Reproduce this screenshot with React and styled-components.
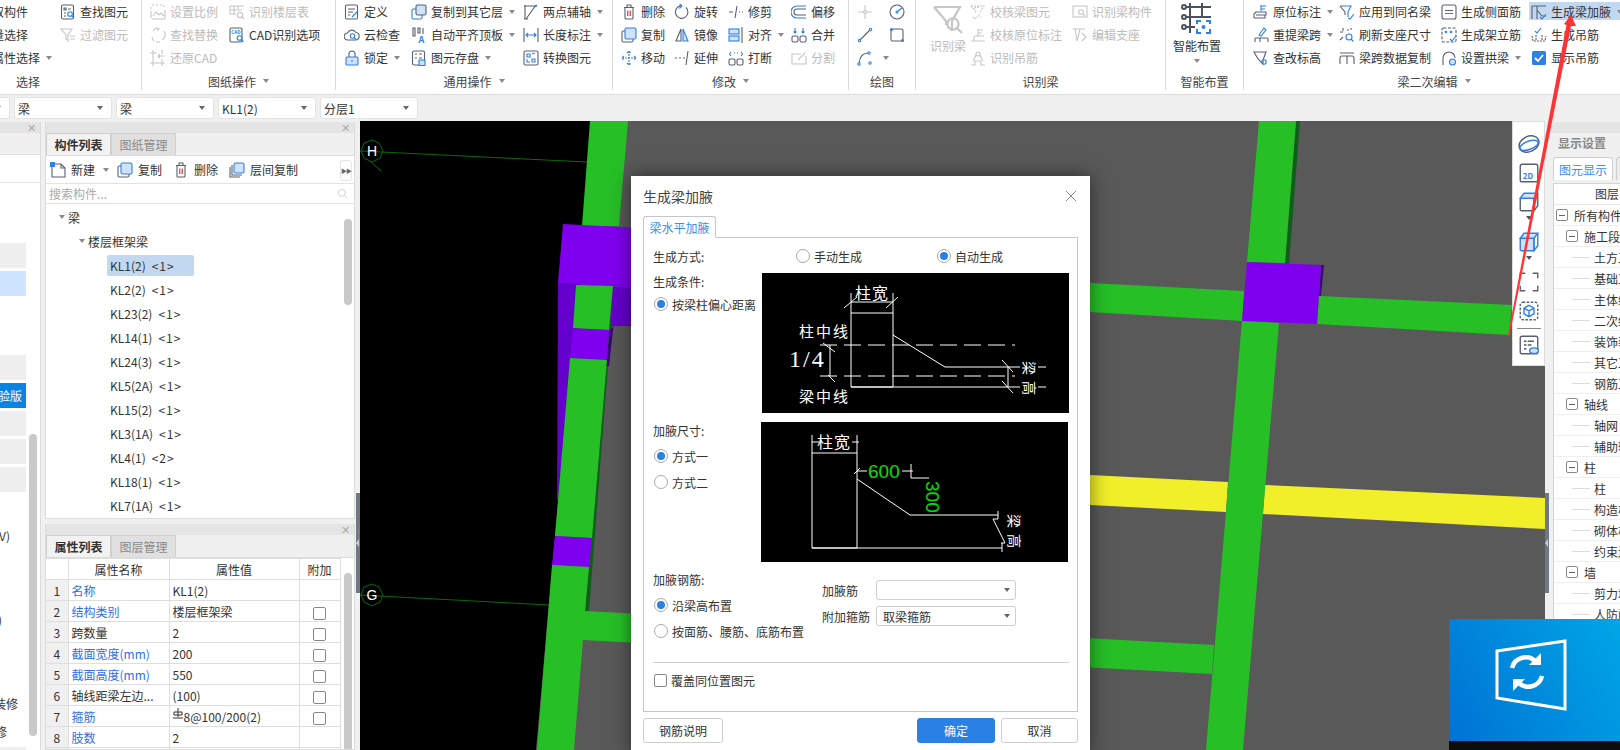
import React from 'react';
import styled, { createGlobalStyle } from 'styled-components';

const GlobalStyle = createGlobalStyle`
  html, body { margin: 0; padding: 0; background: #f0f0f0; }
  body { font-family: "Noto Sans CJK SC", "Noto Sans", sans-serif; font-size: 12px; color: #333; }
`;

const Root = styled.div`
  position: relative;
  width: 1620px;
  height: 750px;
  overflow: hidden;
  display: flex;
  flex-direction: column;
  background: #f0f0f0;
`;

/* ---------- icons ---------- */

const IconSvg = styled.svg`
  flex: none;
  width: ${({ $s }) => $s || 16}px;
  height: ${({ $s }) => $s || 16}px;
  fill: none;
  stroke: currentColor;
  stroke-width: 1.1;
  color: ${({ $off }) => ($off ? '#c6c6c6' : '#566071')};
  --a: ${({ $off }) => ($off ? '#c6c6c6' : '#2f80e4')};
  --f: ${({ $off }) => ($off ? '#eeeeee' : '#cfe2fa')};
  .a { stroke: var(--a); }
  .f { fill: var(--f); }
  .r { stroke: #d22; }
`;

const icons = {
  find: <><rect x="1.5" y="1" width="12" height="14" rx="1.5" /><path d="M4 4h2v2H4zM8 5h3M4 9h2M4 12h2" /><circle className="a" cx="10" cy="10" r="2.3" /><path className="a" d="M11.7 11.7l2.3 2.3" /></>,
  filter: <><path d="M1 2h11L8 8v6l-2-2V8z" /><path d="M10 9h5M10 12h5" /></>,
  scale: <><path d="M2 1h2M6 1h2M10 1h2M14 1v2M1 3v2M2 15h12a1 1 0 0 0 1-1V6M1 7v7" /><path d="M3 12l3-4 3 3 2-2 3 3" /></>,
  replace: <path d="M3 4a6 6 0 0 1 5-3M2 10a6 6 0 0 0 2 4M12 13a6 6 0 0 0 2-9M6 15h4M7 1l2 1-2 2" />,
  restore: <path d="M3 0v16M12 0v4M12 9v7M0 3h7M0 13h15M14 6H8l2-2M8 6l2 2" />,
  floors: <><path d="M1 2h14M1 2v8M5 2v8M1 6h12M1 10h6M9 2v3" /><circle cx="11" cy="11" r="2.6" /><path d="M13 13l2 2" /></>,
  cadopt: <><rect x="1" y="1" width="12" height="14" rx="1.5" /><text x="2.2" y="7" fontSize="4.6" stroke="none" fill="#2f80e4" fontWeight="700">CAD</text><circle className="a" cx="10.5" cy="11" r="2.3" /><path className="a" d="M12 12.6l2.4 2.4" /></>,
  define: <><rect x="1.5" y="1" width="12" height="14" rx="1.5" /><path d="M4 5h7M4 8h5M4 11h2" /><path className="a" d="M8 13l6-6" /></>,
  cloud: <><path d="M4 13a3.5 3.5 0 0 1-.5-7A4.8 4.8 0 0 1 12 5.5 3.8 3.8 0 0 1 12 13z" /><circle className="a" cx="8.5" cy="9" r="2.2" /><path className="a" d="M10 10.5l2 2" /></>,
  lock: <><path d="M5 7V4a3 3 0 0 1 6 0v3" /><rect className="a f" x="2" y="7" width="12" height="8" rx="1" /><path className="a" d="M8 10v2" /></>,
  copyto: <><rect className="a" x="1" y="5" width="10" height="10" rx="1.5" /><rect className="f" x="5" y="1" width="10" height="10" rx="1.5" /></>,
  top: <><path d="M2 1h2v8H2zM7 1h2v5H7zM12 1v6" /><text x="7.5" y="15.5" fontSize="9" fontWeight="700" stroke="none" fill="#2f80e4">A</text></>,
  save: <><rect x="1.5" y="1" width="12" height="14" rx="1.5" /><path d="M4 4h2M8 4h3M4 8h2M8 8h3" /><rect className="a f" x="8" y="10" width="6" height="5.5" /></>,
  twopoint: <><path d="M1 2h13M3 15L13 1M2 1v14M1 15h4" /><path className="a" d="M11 3l3-2" /></>,
  dim: <><path d="M1 1v14M15 1v14" /><path className="a" d="M3 8h10M5 6L3 8l2 2M11 6l2 2-2 2" /></>,
  convert: <><rect x="1" y="1" width="14" height="14" rx="1.5" /><path className="a" d="M4 4h3v3H4zM9 4a2 2 0 0 1 3 0M9 9h3v3H9zM7 12H4V9" /></>,
  trash: <><path d="M3 3.5h10M6 3V1h4v2M4 4v10a1 1 0 0 0 1 1h6a1 1 0 0 0 1-1V4" /><path className="r" d="M6.8 6.5v5.5M9.2 6.5v5.5" /></>,
  rotate: <><path d="M12 3.5A6.3 6.3 0 1 1 6 2" /><path className="a" d="M6 0v4l2-2z" /></>,
  trim: <path d="M1 8h4M11 8h1M14 8h1M9 2L7 14" />,
  mirror: <><path d="M7 2L2 14h5z" /><path className="a f" d="M9 2l5 12H9z" /></>,
  extend: <path d="M1 8h2M5 8h2M9 8h2M14 1l-2 14" />,
  align: <><rect className="a f" x="1" y="2" width="10" height="5" /><rect className="a f" x="1" y="9" width="10" height="5" /><path d="M14 0v16" /></>,
  merge: <><rect x="1" y="9" width="6" height="6" rx="1.5" /><rect x="9" y="9" width="6" height="6" rx="1.5" /><path className="a" d="M4 1v5M12 1v5M2.5 4.5L4 6l1.5-1.5M10.5 4.5L12 6l1.5-1.5" /></>,
  breakit: <><rect x="1" y="9" width="6" height="6" rx="1.5" /><rect x="9" y="9" width="6" height="6" rx="1.5" /><path className="a" d="M3 2l-1.5 2L3 6M13 2l1.5 2L13 6" /><path d="M6 3h1M9 3h1" /></>,
  offset: <><path className="a" d="M15 2H6a6 6 0 0 0 0 12h9" /><path d="M15 5H6a3 3 0 0 0 0 6h9" /></>,
  split: <><path d="M15 6v8H1V4h9" /><path d="M7 10l7-7" /></>,
  copy: <><rect x="1" y="4" width="11" height="11" rx="1.5" /><rect className="a f" x="4" y="1" width="11" height="11" rx="1.5" /></>,
  move: <path className="a" d="M8 1v14M1 8h14M6 3l2-2 2 2M6 13l2 2 2-2M3 6L1 8l2 2M13 6l2 2-2 2" strokeDasharray="2 1" />,
  point: <><path d="M8 1v5M8 10v5M1 8h5M10 8h5" /><circle className="f" cx="8" cy="8" r="1.5" /></>,
  circle: <><circle cx="8" cy="8" r="7" /><circle className="a" cx="8" cy="8" r="1" /><path className="a" d="M9 7l4-3" /></>,
  line: <><path d="M3 13L13 3" /><circle className="a" cx="2.5" cy="13.5" r="1.2" /><circle className="a" cx="13.5" cy="2.5" r="1.2" /></>,
  rect: <><rect x="2" y="2" width="12" height="12" rx="1.5" /><circle className="a" cx="2.5" cy="2.5" r="1" /><circle className="a" cx="13.5" cy="13.5" r="1" /></>,
  arc: <><path d="M2 13C3 6 7 3 11 3" /><circle className="a" cx="2" cy="14" r="1.2" /><circle className="a" cx="12" cy="3" r="1.2" /><circle className="a" cx="13" cy="13" r="1.2" /></>,
  beam: <><path d="M1 2h13L10 9v5M1 2l6 7v2" /><circle cx="10.5" cy="10.5" r="2.8" /><path d="M12.5 12.5l2.5 2.5" /></>,
  checkbeam: <path d="M1 2h13l-4 6M1 2l6 7M9 3l-5 1M3 13l2 2 5-5M10 13h1" strokeDasharray="2 1" />,
  origin: <path d="M1 14h14M4 14v-3a2 2 0 0 1 2-2h8M8 2v7M8 3h5M8 6h4" />,
  hanger: <><circle cx="8" cy="4" r="2" /><path d="M1 15h4v-4h6v4h4M6 5L3 11M10 5l3 6" /></>,
  member: <><rect x="1" y="2" width="14" height="11" /><circle cx="9" cy="8" r="2.3" /><path d="M11 10l2 2" /></>,
  support: <path d="M1 2h12M3 2l2 12 3-12M10 6l4 4-4 4" />,
  tag: <><path d="M8 1v6M8 2h5M8 5h4" className="a" /><path d="M1 14v-4l2-2h10v3H3" /><path d="M1 14h11v-3" /></>,
  refetch: <><path d="M2 15v-3a1 1 0 0 1 1-1h11a1 1 0 0 1 1 1v3M7 11v4" /><path className="a" d="M6 8l5-7 2 2-5 6z" /></>,
  height: <><path d="M1 2h12l-3 8v4L5 9z" /><circle className="a" cx="11" cy="12" r="2.2" /></>,
  same: <><path className="a" d="M1 2h11l-3 6v5" /><path d="M1 2l5 6v3" /><path className="a" d="M9 14l2 1 4-5" /></>,
  refresh: <><path d="M4 1v3M1 5h3M10 3h-2M12 1v2" /><circle className="a" cx="10" cy="10" r="3" /><path className="a" d="M12 12l2.5 2.5" /><path d="M1 13l3-3" /></>,
  copyspan: <path d="M1 14V8a2 2 0 0 1 2-2h10a2 2 0 0 1 2 2v6M8 6v8M1 3h14" />,
  side: <><rect x="1" y="1" width="14" height="14" rx="2" /><path d="M4 6.5h8" /><path className="a" d="M4 9.5h8" /></>,
  erect: <><rect x="1" y="1" width="14" height="14" rx="1.5" strokeDasharray="3 1.5" /><circle className="a" cx="5" cy="5" r=".8" /><circle className="a" cx="10" cy="5" r=".8" /><path className="a" d="M9 12l2 2 4-5" /></>,
  arch: <><path d="M2 15V8a6 6 0 0 1 12 0" /><circle className="a f" cx="11.5" cy="12" r="3" /></>,
  haunch: <><path d="M1 2h14M1 2v13M6 2v13M6 6l5 6h4" /><path className="a" d="M9 13l2 2 4-5" /></>,
  hang: <><path className="a" d="M4 4l2 2 4-5" /><path d="M1 9l1 5h12l1-5M5 8v6M11 8v6" strokeDasharray="2 1" /></>,
  chk: <><rect x="1" y="1" width="14" height="14" rx="1.5" fill="#2f80e4" stroke="none" /><path d="M4 8l3 3 5-6" stroke="#fff" strokeWidth="1.8" /></>,
  newdoc: <><path d="M4 2h7l4 4v9H2V5" /><path d="M11 2v4h4" /><rect x="0" y="0" width="5" height="5" fill="#2f80e4" stroke="none" /></>,
  floorcopy: <><path d="M1 5v10h10M3 3v10h10" /><rect className="a f" x="5" y="1" width="10" height="10" rx="1.5" /></>,
  orbit: <><ellipse cx="8" cy="8" rx="7.5" ry="5.5" transform="rotate(-25 8 8)" /><ellipse className="a" cx="8" cy="9" rx="7" ry="3" transform="rotate(-20 8 9)" /></>,
  twod: <><rect x="1" y="1" width="14" height="14" rx="1.5" /><text x="3" y="12.5" fontSize="6.4" fontWeight="700" stroke="none" fill="#2f80e4">2D</text></>,
  cube: <><rect x="1" y="5" width="11" height="10" rx="1" /><path className="a f" d="M1 5l3-4h11l-3 4z" /><path d="M12 5v10l3-4V1" /></>,
  cubeb: <><rect className="a f" x="1" y="5" width="11" height="10" rx="1" /><path className="a f" d="M1 5l3-4h11l-3 4z" /><path className="a" d="M12 5v10l3-4V1" /></>,
  corners: <path d="M1 5V1h4M11 1h4v4M15 11v4h-4M5 15H1v-4" />,
  dcube: <><rect x="1" y="1" width="14" height="14" rx="2" strokeDasharray="2 1.2" /><path className="a" d="M8 3.5l4 2.2v4.6L8 12.5l-4-2.2V5.7zM4 5.7l4 2.2 4-2.2M8 8v4.5" /></>,
  listeye: <><rect x="1" y="1" width="14" height="14" rx="1.5" /><path d="M4 5h2M7 5h5M4 8h2M7 8h3M4 11h2" /><ellipse className="a f" cx="12" cy="12.5" rx="3.5" ry="2.2" /></>,
  search: <><circle cx="7" cy="7" r="5" /><path d="M11 11l3.5 3.5" /></>,
};

const Ico = ({ name, off, size, className }) => (
  <IconSvg viewBox="0 0 16 16" $off={off} $s={size} className={className}>{icons[name]}</IconSvg>
);

const Caret = styled.i`
  flex: none;
  width: 0;
  height: 0;
  margin-left: ${({ $ml }) => $ml ?? 6}px;
  border: 3.5px solid transparent;
  border-top: 4px solid ${({ $c }) => $c || '#8a8a8a'};
  border-bottom: 0;
`;

/* ---------- ribbon ---------- */

const Ribbon = styled.header`
  flex: 0 0 95px;
  display: flex;
  background: #fff;
  border-bottom: 1px solid #dcdcdc;
  box-sizing: border-box;
`;

const Group = styled.section`
  flex: 0 0 ${({ $w }) => $w}px;
  box-sizing: border-box;
  margin-left: ${({ $ml }) => $ml || 0}px;
  height: 90px;
  display: flex;
  flex-direction: column;
  border-right: 1px solid #dcdcdc;
  &:last-child { border-right: 0; }
`;

const GroupBody = styled.div`
  flex: 0 0 72px;
  display: flex;
  padding-left: ${({ $pad }) => $pad}px;
`;

const GroupLabel = styled.div`
  display: flex;
  justify-content: center;
  align-items: center;
  height: 18px;
  color: #444;
`;

const Col = styled.div`
  flex: 0 0 ${({ $w }) => $w}px;
  display: flex;
  flex-direction: column;
`;

const ToolRow = styled.div`
  display: flex;
  align-items: center;
  height: 23px;
  gap: 4px;
  white-space: nowrap;
  color: ${({ $off }) => ($off ? '#bbbbbb' : '#333')};
  ${({ $on }) => $on && `
    margin-left: -2px;
    padding-left: 2px;
    background: linear-gradient(#c2d8f0, #c2d8f0) no-repeat 0 2px / 100% 18px;
  `}
`;

const LargeTool = styled.div`
  display: flex;
  flex-direction: column;
  align-items: center;
  padding-top: 3px;
  color: ${({ $off }) => ($off ? '#bbbbbb' : '#333')};
  span { margin-top: 2px; line-height: 18px; }
  i { margin: 4px 0 0; }
`;

const Tool = ({ icon, off, caret, on, children }) => (
  <ToolRow $off={off} $on={on}>
    {icon && <Ico name={icon} off={off} />}
    <span>{children}</span>
    {caret && <Caret $ml={2} />}
  </ToolRow>
);

const groups = [
  {
    label: '选择', w: 227, ml: -85, pad: 65, cols: [
      { w: 80, items: [[null, '拾取构件'], [null, '批量选择'], [null, '按属性选择', 'c']] },
      { w: 70, items: [['find', '查找图元'], ['filter', '过滤图元', 'o']] },
    ],
  },
  {
    label: '图纸操作', menu: true, w: 194, pad: 8, cols: [
      { w: 79, items: [['scale', '设置比例', 'o'], ['replace', '查找替换', 'o'], ['restore', '还原CAD', 'o']] },
      { w: 100, items: [['floors', '识别楼层表', 'o'], ['cadopt', 'CAD识别选项']] },
    ],
  },
  {
    label: '通用操作', menu: true, w: 277, pad: 8, cols: [
      { w: 67, items: [['define', '定义'], ['cloud', '云检查'], ['lock', '锁定', 'c']] },
      { w: 112, items: [['copyto', '复制到其它层', 'c'], ['top', '自动平齐顶板', 'c'], ['save', '图元存盘', 'c']] },
      { w: 80, items: [['twopoint', '两点辅轴', 'c'], ['dim', '长度标注', 'c'], ['convert', '转换图元']] },
    ],
  },
  {
    label: '修改', menu: true, w: 236, pad: 8, cols: [
      { w: 53, items: [['trash', '删除'], ['copy', '复制'], ['move', '移动']] },
      { w: 54, items: [['rotate', '旋转'], ['mirror', '镜像'], ['extend', '延伸']] },
      { w: 63, items: [['trim', '修剪'], ['align', '对齐', 'c'], ['breakit', '打断']] },
      { w: 50, items: [['offset', '偏移'], ['merge', '合并'], ['split', '分割', 'o']] },
    ],
  },
  {
    label: '绘图', w: 67, pad: 8, cols: [
      { w: 32, items: [['point', '', 'o'], ['line', ''], ['arc', '', 'c']] },
      { w: 20, items: [['circle', ''], ['rect', '']] },
    ],
  },
  {
    label: '识别梁', w: 250, pad: 10, cols: [
      { w: 44, large: { icon: 'beam', text: '识别梁', off: true } },
      { w: 102, items: [['checkbeam', '校核梁图元', 'o'], ['origin', '校核原位标注', 'o'], ['hanger', '识别吊筋', 'o']] },
      { w: 80, items: [['member', '识别梁构件', 'o'], ['support', '编辑支座', 'o']] },
    ],
  },
  {
    label: '智能布置', w: 78, pad: 7, cols: [
      { w: 48, large: { text: '智能布置', smart: true } },
    ],
  },
  {
    label: '梁二次编辑', menu: true, w: 380, pad: 9, cols: [
      { w: 86, items: [['tag', '原位标注', 'c'], ['refetch', '重提梁跨', 'c'], ['height', '查改标高']] },
      { w: 102, items: [['same', '应用到同名梁'], ['refresh', '刷新支座尺寸'], ['copyspan', '梁跨数据复制']] },
      { w: 90, items: [['side', '生成侧面筋'], ['erect', '生成架立筋'], ['arch', '设置拱梁', 'c']] },
      { w: 91, items: [['haunch', '生成梁加腋', 'cs'], ['hang', '生成吊筋'], ['chk', '显示吊筋']] },
    ],
  },
];

const SmartIcon = () => (
  <IconSvg viewBox="0 0 32 32" $s={32} style={{ strokeWidth: 2, color: '#4a5260' }}>
    <path d="M5 4h25M5 14h25M5 24h9M9 0v30M21 0v15" />
    <circle cx="3" cy="4" r="2" /><circle cx="3" cy="14" r="2" /><circle cx="3" cy="24" r="2" />
    <path className="a" d="M16 21v-3h4M25 18h4v3M29 26v4h-4M20 30h-4v-4" />
    <circle className="a" cx="22.5" cy="24" r="1" />
  </IconSvg>
);

const RibbonBar = () => (
  <Ribbon>
    {groups.map((g) => (
      <Group key={g.label} $w={g.w} $ml={g.ml}>
        <GroupBody $pad={g.pad}>
          {g.cols.map((c, i) => (
            <Col key={i} $w={c.w}>
              {c.large && (
                <LargeTool $off={c.large.off}>
                  {c.large.smart ? <SmartIcon /> : <Ico name={c.large.icon} off={c.large.off} size={32} />}
                  <span>{c.large.text}</span>
                  {c.large.smart && <Caret $ml={0} />}
                </LargeTool>
              )}
              {c.items && c.items.map(([icon, text, flag], j) => (
                <Tool key={j} icon={icon} off={flag === 'o'} caret={flag === 'c' || flag === 'cs'} on={flag === 'cs'}>{text}</Tool>
              ))}
            </Col>
          ))}
        </GroupBody>
        <GroupLabel>{g.label}{g.menu && <Caret $ml={7} />}</GroupLabel>
      </Group>
    ))}
  </Ribbon>
);

/* ---------- combo row ---------- */

const ComboBar = styled.div`
  flex: 0 0 26px;
  box-sizing: border-box;
  display: flex;
  gap: 4px;
  padding-top: 2px;
  margin-left: -88px;
`;

const Combo = styled.div`
  flex: 0 0 98px;
  box-sizing: border-box;
  height: 22px;
  display: flex;
  align-items: center;
  justify-content: space-between;
  padding: 0 8px 0 3px;
  background: #fff;
  border: 1px solid #e4e4e4;
  border-radius: 3px;
`;

/* ---------- work area ---------- */

const Work = styled.main`
  position: relative;
  flex: 1;
  display: flex;
  min-height: 0;
`;

const Dock = styled.div`
  flex: 0 0 360px;
  display: flex;
  gap: 4px;
  padding-top: 1px;
  box-sizing: border-box;
`;

const TitleStrip = styled.div`
  flex: 0 0 11px;
  height: 11px;
  background: #e4e4e4;
  position: relative;
  display: flex;
  justify-content: flex-end;
  align-items: center;
  padding-right: 4px;
  color: #aaa;
  font-size: 11px;
  line-height: 11px;
`;

const StubPanel = styled.div`
  position: relative;
  flex: 0 0 41px;
  display: flex;
  flex-direction: column;
  border-right: 1px solid #dcdcdc;
  box-sizing: border-box;
  background: #fff;
  overflow: hidden;
`;

const StubHead = styled.div`
  height: ${({ $h }) => $h}px;
  flex: none;
  background: ${({ $bg }) => $bg};
  border-bottom: 1px solid #e2e2e2;
  box-sizing: border-box;
`;

const StubRows = styled.div`
  display: flex;
  flex-direction: column;
  padding-top: 60px;
`;

const StubRow = styled.div`
  flex: 0 0 25px;
  width: 26px;
  margin-bottom: 3px;
  box-sizing: border-box;
  display: flex;
  justify-content: flex-end;
  align-items: center;
  padding-right: ${({ $pr }) => $pr || 8}px;
  white-space: nowrap;
  background: ${({ $k }) => ({ g: '#eeeeee', b: '#cfe5ff', t: '#0a84e3' }[$k] || 'transparent')};
  color: ${({ $k }) => ($k === 't' ? '#fff' : '#333')};
`;

const Thumb = styled.div`
  position: absolute;
  left: ${({ $x }) => $x}px;
  top: ${({ $y }) => $y}px;
  width: 8px;
  height: ${({ $h }) => $h}px;
  background: #c9c9c9;
  border-radius: 4px;
`;

const stubRows = [
  ['g'], ['b'], [], [], ['g'], ['t', '体验版', 4], ['g'], ['g'], ['g'], [], ['', '(V)', 16], [], [],
  ['', '(D)', 24], [], [], ['', '楼装修', 8], ['', '地修', 19], ['g'],
];

const MainCol = styled.div`
  flex: 0 0 310px;
  display: flex;
  flex-direction: column;
  gap: 5px;
`;

const Panel = styled.section`
  position: relative;
  flex: 0 0 ${({ $h }) => $h}px;
  display: flex;
  flex-direction: column;
  background: #fff;
  border: 1px solid #dcdcdc;
  border-top: 0;
  box-sizing: border-box;
  overflow: hidden;
`;

const Tabs = styled.div`
  flex: 0 0 22px;
  display: flex;
  background: #f0f0f0;
  border-bottom: 1px solid #dcdcdc;
`;

const Tab = styled.div`
  flex: 0 0 65px;
  box-sizing: border-box;
  display: flex;
  align-items: center;
  justify-content: center;
  font-weight: ${({ $on }) => ($on ? 700 : 400)};
  color: ${({ $on }) => ($on ? '#333' : '#8a8a8a')};
  background: ${({ $on }) => ($on ? '#f2f2f2' : '#e0e0e0')};
  border: 1px solid #cfcfcf;
  border-bottom: 0;
`;

const ListTools = styled.div`
  flex: 0 0 27px;
  display: flex;
  align-items: center;
  padding-left: 4px;
  border-bottom: 1px solid #e2e2e2;
`;

const ListTool = styled.div`
  display: flex;
  align-items: center;
  gap: 5px;
  margin-right: ${({ $mr }) => $mr}px;
`;

const MoreBtn = styled.div`
  position: absolute;
  right: 2px;
  top: 38px;
  width: 10px;
  height: 19px;
  border: 1px solid #e6e6e6;
  border-radius: 3px;
  color: #666;
  font-size: 6px;
  line-height: 19px;
  text-align: center;
  letter-spacing: -1px;
`;

const Search = styled.div`
  flex: 0 0 19px;
  display: flex;
  align-items: center;
  justify-content: space-between;
  padding: 0 6px 0 3px;
  color: #aaa;
  border-bottom: 1px solid #e2e2e2;
`;

const Tree = styled.div`
  padding-top: 1px;
  display: flex;
  flex-direction: column;
`;

const TreeRow = styled.div`
  flex: 0 0 24px;
  height: 24px;
  display: flex;
  align-items: center;
  gap: 3px;
  padding-left: ${({ $l }) => $l}px;
`;

const BeamItem = styled.span`
  box-sizing: border-box;
  width: 87px;
  height: 21px;
  padding-left: 3px;
  line-height: 21px;
  margin-left: -3px;
  border-radius: 2px;
  white-space: pre;
  background: ${({ $on }) => ($on ? '#c2d8f0' : 'transparent')};
`;

const BeamCount = styled.span`
  margin-left: 6px;
  letter-spacing: 1px;
`;

const beams = ['KL1(2)', 'KL2(2)', 'KL23(2)', 'KL14(1)', 'KL24(3)', 'KL5(2A)', 'KL15(2)', 'KL3(1A)', 'KL4(1)', 'KL18(1)', 'KL7(1A)'];

const PropTable = styled.table`
  border-collapse: collapse;
  table-layout: fixed;
  width: 294px;
  td, th {
    height: 21px;
    padding: 0 3px;
    font-weight: 400;
    border: 1px solid #dedede;
    white-space: nowrap;
    overflow: hidden;
    box-sizing: border-box;
  }
  td:first-child, th:first-child { border-left: 0; }
  th { text-align: center; }
`;

const NumCell = styled.td`
  text-align: center;
  background: ${({ $plain }) => ($plain ? '#fff' : '#f0f0f0')};
`;

const NameCell = styled.td`
  color: ${({ $link }) => ($link ? '#2f6fe0' : '#333')};
`;

const ChkCell = styled.td`
  text-align: center;
`;

const Box = styled.span`
  display: inline-block;
  width: 13px;
  height: 13px;
  box-sizing: border-box;
  border: 1px solid #888;
  border-radius: 2px;
  vertical-align: middle;
`;

const RebarMark = styled.svg`
  width: 10px;
  height: 12px;
  margin-right: 1px;
  fill: none;
  stroke: #333;
  vertical-align: 2px;
`;

const props = [
  ['名称', 'KL1(2)', 1, 0],
  ['结构类别', '楼层框架梁', 1, 1],
  ['跨数量', '2', 0, 1],
  ['截面宽度(mm)', '200', 1, 1],
  ['截面高度(mm)', '550', 1, 1],
  ['轴线距梁左边...', '(100)', 0, 1],
  ['箍筋', 'rebar', 1, 1],
  ['肢数', '2', 1, 0],
  ['', '', 0, 0],
];

/* ---------- canvas ---------- */

const Canvas = styled.div`
  position: relative;
  flex: 0 0 1185px;
  background: #595959;
`;

const Scene = styled.svg`
  display: block;
  width: 1185px;
  height: 629px;
`;

const Handle = styled.div`
  position: absolute;
  left: ${({ $x }) => $x}px;
  top: 372px;
  width: 4px;
  height: 100px;
  background: #6f7885;
  &::after {
    content: '';
    position: absolute;
    top: 46px;
    left: 0;
    border: 4px solid transparent;
    border-left: 0;
    border-right: 3px solid #c9ccd1;
  }
`;

const FloatBar = styled.div`
  position: absolute;
  right: 0;
  top: 0;
  width: 33px;
  height: 245px;
  box-sizing: border-box;
  background: #fff;
  border: 1px solid #dcdcdc;
  display: flex;
  flex-direction: column;
  align-items: center;
  padding-top: 11px;
`;

const FloatIcon = styled(Ico)`
  margin-bottom: ${({ $mb }) => $mb ?? 8}px;
`;

const FloatCaret = styled(Caret)`
  margin: 0 0 12px;
`;

const FloatRule = styled.div`
  width: 24px;
  height: 1px;
  background: #888;
  margin: 0 0 6px;
`;

/* ---------- dialog ---------- */

const Dialog = styled.div`
  position: absolute;
  left: 271px;
  top: 55px;
  width: 459px;
  height: 581px;
  box-sizing: border-box;
  padding: 0 12px;
  background: #fff;
  box-shadow: 0 0 18px rgba(0, 0, 0, 0.5);
`;

const DialogTitle = styled.div`
  height: 40px;
  display: flex;
  align-items: center;
  justify-content: space-between;
  font-size: 14px;
  color: #444;
`;

const CloseMark = styled.svg`
  width: 12px;
  height: 12px;
  margin-right: 1px;
  stroke: #888;
  fill: none;
`;

const DialogTab = styled.div`
  width: 73px;
  height: 22px;
  margin-bottom: -1px;
  position: relative;
  box-sizing: border-box;
  border: 1px solid #c6c6c6;
  border-bottom: 1px solid #fff;
  border-radius: 3px 3px 0 0;
  display: flex;
  align-items: center;
  justify-content: center;
  color: #3a8ee6;
  background: #fff;
`;

const DialogBox = styled.div`
  height: 475px;
  box-sizing: border-box;
  border: 1px solid #c6c6c6;
  padding: 9px 9px 0;
`;

const ModeRow = styled.div`
  display: flex;
  align-items: center;
  height: 18px;
  margin-bottom: 8px;
`;

const ModeLabel = styled.div`
  flex: 0 0 143px;
`;

const ModeOption = styled.div`
  flex: 0 0 141px;
`;

const Section = styled.div`
  display: flex;
  margin-bottom: 9px;
`;

const SideCol = styled.div`
  flex: 0 0 ${({ $w }) => $w}px;
`;

const FieldTitle = styled.div`
  height: 18px;
  line-height: 18px;
`;

const RadioStack = styled.div`
  margin-top: ${({ $mt }) => $mt || 0}px;
  padding-left: 1px;
`;

const RadioLine = styled.label`
  height: 26px;
  display: flex;
  align-items: center;
  gap: 4px;
  white-space: nowrap;
`;

const RadioMark = styled.span`
  flex: none;
  width: 14px;
  height: 14px;
  box-sizing: border-box;
  border: 1px solid #a8a8a8;
  border-radius: 50%;
  display: flex;
  align-items: center;
  justify-content: center;
  &::after {
    content: '';
    width: 8px;
    height: 8px;
    border-radius: 50%;
    background: ${({ $on }) => ($on ? '#2b80e4' : 'transparent')};
  }
`;

const Radio = ({ on, children }) => (
  <RadioLine><RadioMark $on={on} /><span>{children}</span></RadioLine>
);

const Figure = styled.svg`
  flex: none;
  display: block;
  width: 307px;
  height: 140px;
  background: #000;
  stroke: #fff;
  fill: none;
  text { stroke: none; fill: #fff; font-family: "Noto Sans CJK SC", sans-serif; }
  text.g { fill: #00e000; font-family: "Liberation Sans", sans-serif; }
`;

const RebarFields = styled.div`
  margin-top: 9px;
  display: grid;
  grid-template-columns: 54px 140px;
  grid-auto-rows: 20px;
  row-gap: 6px;
  align-items: center;
`;

const FieldSelect = styled.div`
  box-sizing: border-box;
  height: 20px;
  display: flex;
  align-items: center;
  justify-content: space-between;
  padding: 0 5px 0 6px;
  border: 1px solid #cfcfcf;
  border-radius: 3px;
`;

const Divider = styled.div`
  height: 1px;
  background: #cfcfcf;
  margin: 18px 0 10px;
  width: 416px;
`;

const CheckLine = styled.div`
  display: flex;
  align-items: center;
  gap: 4px;
  padding-left: 1px;
  height: 14px;
`;

const DialogFoot = styled.div`
  display: flex;
  align-items: center;
  margin-top: 6px;
`;

const Btn = styled.button`
  width: ${({ $w }) => $w || 77}px;
  height: 25px;
  margin: 0 0 0 ${({ $ml }) => $ml || 0}px;
  padding: 0;
  font: inherit;
  border-radius: 3px;
  border: 1px solid ${({ $primary }) => ($primary ? '#2b80e4' : '#cfcfcf')};
  background: ${({ $primary }) => ($primary ? '#2b80e4' : '#fff')};
  color: ${({ $primary }) => ($primary ? '#fff' : '#333')};
`;

/* ---------- right dock ---------- */

const RightDock = styled.aside`
  flex: 1;
  min-width: 0;
  padding: 1px 0 0 5px;
  display: flex;
  flex-direction: column;
  overflow: hidden;
  background: #f0f0f0;
`;

const RightTitle = styled.div`
  height: 24px;
  flex: none;
  padding-left: 8px;
  font-weight: 700;
  line-height: 20px;
  color: #888;
`;

const RightTabs = styled.div`
  flex: none;
  display: flex;
  gap: 3px;
  height: 23px;
  padding-left: 3px;
`;

const RightTab = styled.div`
  flex: none;
  width: 60px;
  box-sizing: border-box;
  border: 1px solid #cfcfcf;
  border-bottom: 0;
  border-radius: 3px 3px 0 0;
  background: ${({ $on }) => ($on ? '#fff' : '#ececec')};
  color: #3a8ee6;
  display: flex;
  align-items: center;
  justify-content: center;
`;

const LayerTree = styled.div`
  margin: 3px 0 0 3px;
  width: 90px;
  background: #fff;
  border: 1px solid #d4d4d4;
  flex: 1;
`;

const LayerHead = styled.div`
  height: 20px;
  line-height: 20px;
  padding-left: 41px;
  border-bottom: 1px solid #e6e6e6;
`;

const LayerRow = styled.div`
  position: relative;
  height: 20px;
  display: flex;
  align-items: center;
  gap: 6px;
  white-space: nowrap;
  padding-left: ${({ $lv }) => [2, 12, 40][$lv]}px;
  border-bottom: 1px solid #efefef;
  &::before {
    content: ${({ $lv }) => ($lv === 2 ? "''" : 'none')};
    position: absolute;
    left: 18px;
    top: 10px;
    width: 18px;
    height: 1px;
    background: #ddd;
  }
`;

const Minus = styled.span`
  flex: none;
  width: 12px;
  height: 12px;
  box-sizing: border-box;
  border: 1px solid #888;
  border-radius: 2px;
  display: flex;
  align-items: center;
  justify-content: center;
  &::after {
    content: '';
    width: 6px;
    height: 1px;
    background: #666;
  }
`;

const layers = [
  [0, '所有构件'], [1, '施工段'], [2, '土方工程'], [2, '基础工程'], [2, '主体结构'], [2, '二次结构'], [2, '装饰装修'],
  [2, '其它工程'], [2, '钢筋工程'], [1, '轴线'], [2, '轴网'], [2, '辅助轴线'], [1, '柱'], [2, '柱'], [2, '构造柱'],
  [2, '砌体柱'], [2, '约束边缘'], [1, '墙'], [2, '剪力墙'], [2, '人防门框墙'],
];

/* ---------- overlays ---------- */

const UpdateTile = styled.div`
  position: absolute;
  right: 0;
  bottom: 0;
  width: 171px;
  height: 131px;
  box-sizing: border-box;
  border-bottom: 9px solid #0c0c0c;
  background: linear-gradient(60deg, #0072d4, #00a6e6);
  display: flex;
  align-items: center;
  justify-content: center;
`;

const UpdateMark = styled.svg`
  width: 72px;
  height: 72px;
  margin: -10px 0 0 -8px;
  fill: none;
  stroke: #fff;
`;

const ArrowLayer = styled.svg`
  position: absolute;
  inset: 0;
  width: 1620px;
  height: 750px;
  pointer-events: none;
`;

const P = ({ c, d }) => <polygon fill={c} stroke="none" points={d} />;

const GREEN = '#26bf26';
const PURPLE = '#7f00ee';

const App = () => (
  <Root>
    <GlobalStyle />
    <RibbonBar />
    <ComboBar>
      {['', '梁', '梁', 'KL1(2)', '分层1'].map((t, i) => (
        <Combo key={i}><span>{t}</span><Caret $c="#666" /></Combo>
      ))}
    </ComboBar>
    <Work>
      <Dock>
        <StubPanel>
          <TitleStrip>✕</TitleStrip>
          <StubHead $h={22} $bg="#f0f0f0" />
          <StubHead $h={28} $bg="#fff" />
          <StubRows>
            {stubRows.map(([k, t, pr], i) => <StubRow key={i} $k={k} $pr={pr}>{t}</StubRow>)}
          </StubRows>
          <Thumb $x={29} $y={312} $h={302} />
        </StubPanel>
        <MainCol>
          <Panel $h={397}>
            <TitleStrip>✕</TitleStrip>
            <Tabs><Tab $on>构件列表</Tab><Tab>图纸管理</Tab></Tabs>
            <ListTools>
              <ListTool $mr={8}><Ico name="newdoc" /><span>新建</span><Caret $ml={3} /></ListTool>
              <ListTool $mr={11}><Ico name="copy" /><span>复制</span></ListTool>
              <ListTool $mr={11}><Ico name="trash" /><span>删除</span></ListTool>
              <ListTool $mr={0}><Ico name="floorcopy" /><span>层间复制</span></ListTool>
            </ListTools>
            <MoreBtn>▶▶</MoreBtn>
            <Search><span>搜索构件...</span><Ico name="search" size={11} off /></Search>
            <Tree>
              <TreeRow $l={13}><Caret $ml={0} /><span>梁</span></TreeRow>
              <TreeRow $l={33}><Caret $ml={0} /><span>楼层框架梁</span></TreeRow>
              {beams.map((b, i) => (
                <TreeRow key={b} $l={64}>
                  <BeamItem $on={i === 0}>{b}<BeamCount>{`<${b === 'KL4(1)' ? 2 : 1}>`}</BeamCount></BeamItem>
                </TreeRow>
              ))}
            </Tree>
            <Thumb $x={298} $y={97} $h={86} />
          </Panel>
          <Panel $h={226}>
            <TitleStrip>✕</TitleStrip>
            <Tabs><Tab $on>属性列表</Tab><Tab>图层管理</Tab></Tabs>
            <PropTable>
              <colgroup><col width="22" /><col width="101" /><col width="130" /><col width="41" /></colgroup>
              <thead><tr><th /><th>属性名称</th><th>属性值</th><th>附加</th></tr></thead>
              <tbody>
                {props.map(([name, value, link, chk], i) => (
                  <tr key={i}>
                    <NumCell>{name ? i + 1 : ''}</NumCell>
                    <NameCell $link={link}>{name}</NameCell>
                    <td>
                      {value === 'rebar' ? (
                        <>
                          <RebarMark viewBox="0 0 10 12"><path d="M5 0v9M1 4h8v3H1zM0 10h10" /></RebarMark>8@100/200(2)
                        </>
                      ) : value}
                    </td>
                    <ChkCell>{chk ? <Box /> : null}</ChkCell>
                  </tr>
                ))}
              </tbody>
            </PropTable>
            <Thumb $x={298} $y={49} $h={200} />
          </Panel>
        </MainCol>
      </Dock>
      <Canvas>
        <Scene viewBox="360 121 1185 629">
          <P c="#000" d="360,121 592,121 536,750 360,750" />
          <path d="M360 151L587 162M360 595L549 605M370 161L381 171" stroke="#0a6a0a" fill="none" />
          <polygon points="372,140 379,143 383,151 380,158 372,162 364,158 361,151 364,143" fill="none" stroke="#0a6a0a" />
          <polygon points="372,584 379,587 383,595 380,602 372,606 364,602 361,595 364,587" fill="none" stroke="#0a6a0a" />
          <text x="372" y="156" textAnchor="middle" fill="#fff" fontSize="14" fontFamily="Liberation Sans">H</text>
          <text x="372" y="600" textAnchor="middle" fill="#fff" fontSize="14" fontFamily="Liberation Sans">G</text>

          <P c={GREEN} d="590,121 628,121 619,226 582,226" />
          <P c="#6500cc" d="558,283 640,288 640,326 612,326 590,450 557,500" />
          <P c={PURPLE} d="563,224 640,228 640,288 558,283" />
          <P c="#0f5f1a" d="613,300 589,611 585,611 609,330" />
          <P c="#3e0080" d="610,330 613.5,326 609,366 606,366" />
          <P c={GREEN} d="576,285 613,286 609,330 573,328" />
          <P c={PURPLE} d="573,329 609,330 607,360 570,358" />
          <P c={GREEN} d="570,358 607,360 592,538 555,536" />
          <P c={PURPLE} d="555,536 592,538 589,567 552,565" />
          <P c={GREEN} d="552,565 589,567 585,611 1214,645 1212,674 583,640 574,750 537,750" />

          <P c={GREEN} d="1090,283 1244,291 1242,321 1090,312" />
          <P c={GREEN} d="1319,296 1512,305 1509,335 1317,324" />
          <P c="#f0ef29" d="1090,475 1228,482 1226,512 1090,505" />
          <P c="#f0ef29" d="1265,485 1545,498 1545,529 1263,514" />
          <P c="#0f5f1a" d="1296,121 1300,121 1289,264 1285,264" />
          <P c="#3e0080" d="1321,265 1324,265 1321,296 1319,296" />
          <P c={GREEN} d="1259,121 1296,121 1285,263 1247,262" />
          <P c={GREEN} d="1242,320 1279,323 1243,750 1206,750" />
          <P c={PURPLE} d="1247,262 1321,265 1317,324 1242,321" />
        </Scene>

        <FloatBar>
          <FloatIcon name="orbit" size={22} $mb={8} />
          <FloatIcon name="twod" size={20} $mb={9} />
          <FloatIcon name="cube" size={20} $mb={4} />
          <FloatCaret $c="#555" />
          <FloatIcon name="cubeb" size={20} $mb={4} />
          <FloatCaret $c="#555" />
          <FloatIcon name="corners" size={20} $mb={9} />
          <FloatIcon name="dcube" size={20} $mb={7} />
          <FloatRule />
          <FloatIcon name="listeye" size={20} />
        </FloatBar>

        <Dialog>
          <DialogTitle>
            <span>生成梁加腋</span>
            <CloseMark viewBox="0 0 12 12"><path d="M1 1l10 10M11 1L1 11" /></CloseMark>
          </DialogTitle>
          <DialogTab>梁水平加腋</DialogTab>
          <DialogBox>
            <ModeRow>
              <ModeLabel>生成方式:</ModeLabel>
              <ModeOption><Radio>手动生成</Radio></ModeOption>
              <ModeOption><Radio on>自动生成</Radio></ModeOption>
            </ModeRow>
            <Section>
              <SideCol $w={109}>
                <FieldTitle>生成条件:</FieldTitle>
                <RadioStack><Radio on>按梁柱偏心距离</Radio></RadioStack>
              </SideCol>
              <Figure viewBox="0 0 307 140">
                <path d="M89 40h42v74H89zM89 20v20M131 20v20M89 29h42M82 35l13-11M124 35l12-11" />
                <path d="M58 72h195M58 103h195" strokeDasharray="17 7" />
                <path d="M68 72v31M61 70l12 9M66 102l7 7" />
                <path d="M131 62l52 32h75M89 114h169M246 94v20M240 87l11 12M240 108l11 12M276 94h8M276 114h8" />
                <text x="110" y="26" fontSize="16" textAnchor="middle" letterSpacing="1">柱宽</text>
                <text x="37" y="64" fontSize="15" letterSpacing="2">柱中线</text>
                <text x="37" y="129" fontSize="15" letterSpacing="2">梁中线</text>
                <text x="27" y="94" fontSize="24" style={{ fontFamily: '"Liberation Serif", serif' }} letterSpacing="2">1/4</text>
                <text transform="translate(262 88) rotate(90)" fontSize="14" letterSpacing="6">梁高</text>
              </Figure>
            </Section>
            <Section>
              <SideCol $w={108}>
                <FieldTitle>加腋尺寸:</FieldTitle>
                <RadioStack $mt={3}>
                  <Radio on>方式一</Radio>
                  <Radio>方式二</Radio>
                </RadioStack>
              </SideCol>
              <Figure viewBox="0 0 307 140">
                <path d="M51 31h45v95H51zM51 13v18M96 13v18M51 20h7M91 20h7" />
                <path d="M96 49h10M93 52l6-6M141 49h11M150 42v14h18" />
                <path d="M96 57l53 36h88M51 126h190M237 89v8M232 97h5M232 97l12 24M240 121h4M241 121v9" />
                <text x="73" y="26" fontSize="16" textAnchor="middle" letterSpacing="1">柱宽</text>
                <text className="g" x="107" y="56" fontSize="19">600</text>
                <text className="g" transform="translate(165 59) rotate(90)" fontSize="19">300</text>
                <text transform="translate(248 92) rotate(90)" fontSize="14" letterSpacing="6">梁高</text>
              </Figure>
            </Section>
            <Section>
              <SideCol $w={169}>
                <FieldTitle>加腋钢筋:</FieldTitle>
                <RadioStack $mt={3}>
                  <Radio on>沿梁高布置</Radio>
                  <Radio>按面筋、腰筋、底筋布置</Radio>
                </RadioStack>
              </SideCol>
              <RebarFields>
                <span>加腋筋</span>
                <FieldSelect><span /><Caret $c="#666" /></FieldSelect>
                <span>附加箍筋</span>
                <FieldSelect><span>取梁箍筋</span><Caret $c="#666" /></FieldSelect>
              </RebarFields>
            </Section>
            <Divider />
            <CheckLine><Box /><span>覆盖同位置图元</span></CheckLine>
          </DialogBox>
          <DialogFoot>
            <Btn $w={80}>钢筋说明</Btn>
            <Btn $ml={194} $primary $w={78}>确定</Btn>
            <Btn $ml={6}>取消</Btn>
          </DialogFoot>
        </Dialog>
      </Canvas>
      <RightDock>
        <TitleStrip />
        <RightTitle>显示设置</RightTitle>
        <RightTabs><RightTab $on>图元显示</RightTab><RightTab>楼层显示</RightTab></RightTabs>
        <LayerTree>
          <LayerHead>图层</LayerHead>
          {layers.map(([lv, t], i) => (
            <LayerRow key={i} $lv={lv}>
              {lv < 2 && <Minus />}
              <span>{t}</span>
            </LayerRow>
          ))}
        </LayerTree>
      </RightDock>
      <Handle $x={356} />
      <Handle $x={1545} />
    </Work>
    <UpdateTile>
      <UpdateMark viewBox="0 0 72 72">
        <path d="M2 12L70 2v68L2 59z" strokeWidth="3" />
        <g transform="translate(-4 -3)" strokeWidth="4.5">
          <path d="M21 32a14 14 0 0 1 24-6M51 40a14 14 0 0 1-24 6" />
          <path d="M50 17v12H38z" fill="#fff" stroke="none" />
          <path d="M22 55V43h12z" fill="#fff" stroke="none" />
        </g>
      </UpdateMark>
    </UpdateTile>
    <ArrowLayer viewBox="0 0 1620 750">
      <polygon fill="#ff3333" points="1571,15 1576,26 1571,26 1509.5,336 1508,335 1566.5,25 1564,24" />
    </ArrowLayer>
  </Root>
);

export default App;
